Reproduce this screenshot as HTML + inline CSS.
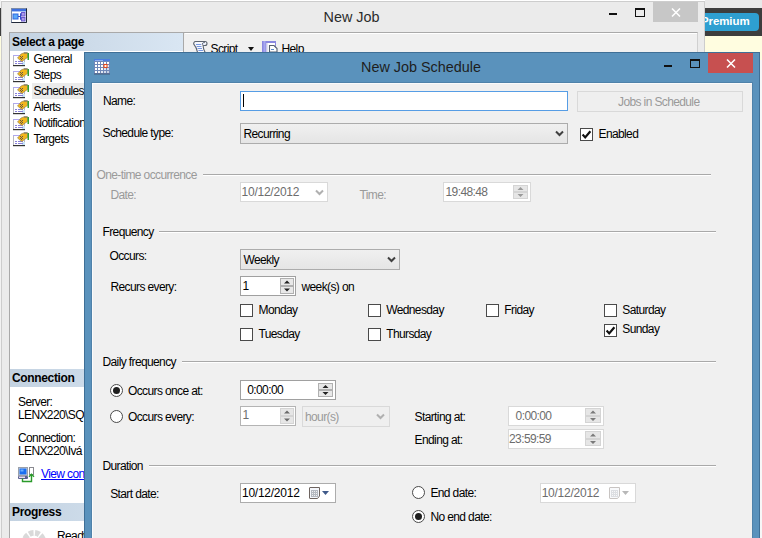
<!DOCTYPE html>
<html><head><meta charset="utf-8">
<style>
*{margin:0;padding:0;box-sizing:border-box}
html,body{width:762px;height:538px;overflow:hidden;background:#fffde0;font-family:"Liberation Sans",sans-serif;font-size:12px;line-height:13px;letter-spacing:-0.62px;color:#000}
div,span{position:absolute;white-space:nowrap}
.t{font-size:11.5px;line-height:13px;letter-spacing:-0.4px}
.b{font-weight:bold;letter-spacing:-0.35px}
.g{color:#9a9a9a}
.gd{color:#6d6d6d}
.box{background:#fff;border:1px solid #acacac}
.dbox{background:#fff;border:1px solid #d9d9d9}
.cb{width:13px;height:13px;background:#fff;border:1px solid #4a4a4a}
.rd{width:13px;height:13px;background:#fff;border:1px solid #4a4a4a;border-radius:50%}
.rd.on::after{content:"";position:absolute;left:2px;top:2px;width:7px;height:7px;border-radius:50%;background:#1f1f1f}
.ln{height:2px;border-top:1px solid #a9a9a9;border-bottom:1px solid #fff}
.combo{border:1px solid #acacac;background:linear-gradient(#f0f0f0,#e5e5e5)}
.spin{border:1px solid #d4d4d4;background:#e6e6e6}
.hdr{background:linear-gradient(to right,#c3d2e1,#d9e6f3)}
</style></head><body>
<!-- background page -->
<div style="left:0;top:0;width:762px;height:1px;background:#fff"></div>
<div style="left:0;top:0;width:1px;height:8px;background:#f4f4f4"></div>
<div style="left:705px;top:0;width:57px;height:8px;background:#e9e9e9"></div>
<div style="left:705px;top:8px;width:57px;height:28px;background:#3d3d3d"></div>
<div style="left:690px;top:13px;width:69px;height:18px;background:#2e9fd1;border-radius:4px"></div>
<div class="b" style="left:701px;top:15px;font-size:11.5px;line-height:13px;letter-spacing:-0.1px;color:#fff">Premium</div>
<div style="left:0;top:8px;width:1px;height:28px;background:#3d3d3d"></div>
<div style="left:0;top:60px;width:1px;height:478px;background:#f2f2f2"></div>
<div style="left:760px;top:60px;width:2px;height:478px;background:#f7f7f7"></div>

<!-- New Job window -->
<div style="left:1px;top:1px;width:704px;height:540px;background:#ebebeb;border:1px solid #cdcdcd"></div>
<svg style="position:absolute;left:11px;top:8px" width="16" height="15">
<rect x="0.5" y="0.5" width="15" height="14" fill="#fff" stroke="#7a8aa8"/>
<path d="M15.5 0.5 V14.5 H0.5" fill="none" stroke="#202838" stroke-width="1"/>
<rect x="1" y="1" width="14" height="2" fill="#3d6fe0"/>
<rect x="1" y="3" width="14" height="1" fill="#a8c0f0"/>
<rect x="2" y="6" width="5" height="5" fill="#5aa8f8" stroke="#2e66e0" stroke-width="1"/>
<path d="M7 8.5 H9.5 M9.5 5.5 V11.5 M9.5 5.5 H11 M9.5 11.5 H11" stroke="#2d50c8" stroke-width="1"/>
<rect x="10.5" y="4.5" width="3.5" height="3.5" fill="#a89ce8" stroke="#6a58d0" stroke-width="1"/>
<rect x="10.5" y="9.5" width="3.5" height="3.5" fill="#a89ce8" stroke="#6a58d0" stroke-width="1"/>
</svg>
<div style="left:323.5px;top:8.5px;font-size:14.4px;line-height:16px;letter-spacing:0;color:#2b2b2b">New Job</div>
<div style="left:609px;top:13px;width:8px;height:2px;background:#111"></div>
<div style="left:635px;top:8px;width:10px;height:9px;border:1px solid #111;border-top-width:2px"></div>
<div style="left:653px;top:2px;width:45px;height:20px;background:#c7c7c7"></div>
<div style="left:0;top:0;width:0;height:0"></div>

<!-- left pane -->
<div style="left:9px;top:32px;width:175px;height:520px;background:#fff;border:1px solid #a9a9a9"></div>
<div class="hdr" style="left:10px;top:33px;width:173px;height:18px"></div>
<div class="b" style="left:12px;top:36px">Select a page</div>
<div style="left:32px;top:83px;width:60px;height:16px;background:#ebebeb"></div>
<div style="left:33.5px;top:53px">General</div>
<div style="left:33.5px;top:69px">Steps</div>
<div style="left:33.5px;top:85px">Schedules</div>
<div style="left:33.5px;top:101px">Alerts</div>
<div style="left:33.5px;top:117px">Notifications</div>
<div style="left:33.5px;top:133px">Targets</div>
<div class="hdr" style="left:10px;top:369px;width:173px;height:18px"></div>
<div class="b" style="left:12px;top:372px">Connection</div>
<div style="left:18px;top:396px">Server:</div>
<div style="left:18px;top:409px">LENX220\SQLEXPRESS</div>
<div style="left:18px;top:432px">Connection:</div>
<div style="left:18px;top:445px">LENX220\Ivá</div>
<div style="left:41px;top:468px;color:#0000ff;text-decoration:underline">View connection properties</div>
<div class="hdr" style="left:10px;top:503px;width:173px;height:18px"></div>
<div class="b" style="left:12px;top:506px">Progress</div>
<div style="left:57px;top:530px">Ready</div>


<!-- left pane icons -->
<svg style="position:absolute;left:0;top:0;width:0;height:0">
<defs>
<g id="pgi">
<rect x="0.5" y="3.5" width="11" height="10" fill="#fff" stroke="#b8b8c0"/>
<rect x="0" y="3" width="12" height="1" fill="#b0a8f0"/>
<rect x="0" y="13" width="12" height="1.2" fill="#333"/>
<rect x="9" y="10" width="3" height="3" fill="#c8e4f8"/>
<rect x="2" y="9" width="2" height="1" fill="#8880d8"/><rect x="5" y="9" width="5" height="1" fill="#8880d8"/>
<rect x="2" y="11" width="2" height="1" fill="#8880d8"/><rect x="5" y="11" width="5" height="1" fill="#8880d8"/>
<path d="M4.5 6 L8 2 L11 0.8 L14.5 0.8 L14.5 5.5 L11.5 7.5 L9 9.5 L7.5 8.5 Z" fill="#f2b61c" stroke="#8a7a50" stroke-width="0.6"/>
<path d="M11 1 H14.5" stroke="#707070" stroke-width="1"/>
<g fill="#3a3a50" opacity=".75"><rect x="7" y="4" width="1" height="1"/><rect x="9" y="4" width="1" height="1"/><rect x="8" y="5" width="1" height="1"/><rect x="7" y="6" width="1" height="1"/><rect x="9" y="6" width="1" height="1"/><rect x="8" y="7" width="1" height="1"/></g>
<rect x="14.5" y="1" width="1.5" height="7" fill="#30a030"/>
</g>
</defs></svg>
<svg style="position:absolute;left:13px;top:52px" width="17" height="15"><use href="#pgi"/></svg>
<svg style="position:absolute;left:13px;top:68px" width="17" height="15"><use href="#pgi"/></svg>
<svg style="position:absolute;left:13px;top:84px" width="17" height="15"><use href="#pgi"/></svg>
<svg style="position:absolute;left:13px;top:100px" width="17" height="15"><use href="#pgi"/></svg>
<svg style="position:absolute;left:13px;top:116px" width="17" height="15"><use href="#pgi"/></svg>
<svg style="position:absolute;left:13px;top:132px" width="17" height="15"><use href="#pgi"/></svg>
<!-- view connection icon -->
<svg style="position:absolute;left:17px;top:466px" width="18" height="17">
<rect x="1.5" y="1.5" width="9" height="8" fill="#d0d4dc" stroke="#9aa0aa"/>
<rect x="2.5" y="2.5" width="7" height="6" fill="#1a6ef0"/>
<rect x="3.5" y="3.5" width="3" height="2" fill="#6ab0ff"/>
<rect x="1" y="10" width="10" height="3" rx="1" fill="#5a5f90"/>
<rect x="2" y="10.5" width="6" height="1.5" fill="#e8e0f0"/>
<rect x="12.5" y="1.5" width="4" height="7" fill="#fff" stroke="#8a8a90"/>
<path d="M5.5 12.5 V15.5 H14.5 V9" fill="none" stroke="#2a9a2a" stroke-width="1.4"/>
<path d="M12 10.8 L14.5 8.3 L17 10.8" fill="none" stroke="#2a9a2a" stroke-width="1.4"/>
</svg>
<!-- spinner -->
<svg style="position:absolute;left:20px;top:528px" width="28" height="12">
<circle cx="14" cy="14.5" r="9.6" fill="none" stroke="#d9d9d9" stroke-width="5.8" stroke-dasharray="4.5 1.53" stroke-dashoffset="-3.79"/>
</svg>
<!-- toolbar -->
<div style="left:184px;top:32px;width:514px;height:520px;background:#f0f0f0;border:1px solid #a9a9a9;border-left:none;border-right-color:#d0d0d0"></div>
<div style="left:185px;top:33px;width:512px;height:1px;background:#fff"></div>
<div style="left:210.5px;top:43px">Script</div>
<div style="left:248px;top:47px;width:0;height:0;border-left:3.5px solid transparent;border-right:3.5px solid transparent;border-top:4px solid #111"></div>
<div style="left:281.5px;top:43px">Help</div><!-- script icon -->
<svg style="position:absolute;left:192px;top:40px" width="16" height="12">
<path d="M3.5 1.5 H13 A2 2 0 0 1 13 5.5 H11.2 Q11 8.5 13.2 12.5 H5.5 Q4.8 8 1.8 4.2 A2 2 0 0 1 3.5 1.5Z" fill="#f6f8fd" stroke="#5c6470" stroke-width="1.1"/>
<path d="M11.2 5.5 A1.6 1.6 0 0 1 12.8 2.6" fill="#cfd8ee" stroke="#5c6470" stroke-width="1"/>
<path d="M4 4.5 H9 M4.6 6.5 H9.5 M5.6 8.5 H10 M6.4 10.5 H11" stroke="#7898e0" stroke-width="1"/>
</svg>
<!-- help icon -->
<svg style="position:absolute;left:262px;top:40px" width="18" height="12">
<rect x="0" y="1" width="14" height="11" fill="#8a88e0"/>
<rect x="1.5" y="1" width="2" height="11" fill="#a8a8f0"/>
<rect x="4" y="3" width="9" height="9" fill="#fff"/>
<rect x="4" y="3" width="1.5" height="9" fill="#c8c8e8"/>
<path d="M7.5 5.5 H12 L15 8.5 V12 H7.5Z" fill="#fff" stroke="#566070" stroke-width="1.1"/>
<rect x="9" y="9" width="3" height="1" fill="#5f8ac8"/>
</svg>


<!-- dialog -->
<div id="dlg" style="left:84px;top:52px;width:676px;height:500px;background:#5a92bc;border:1px solid #3f6f96"></div>
<div style="left:361px;top:59px;font-size:14.4px;line-height:16px;letter-spacing:0;color:#1e1e1e">New Job Schedule</div>
<div style="left:708px;top:53px;width:45px;height:20px;background:#c75050"></div>
<div style="left:664px;top:65px;width:8px;height:2px;background:#111"></div>
<div style="left:690px;top:59px;width:10px;height:9px;border:1px solid #111;border-top-width:2px"></div>
<div style="left:91px;top:82px;width:662px;height:470px;border:1px solid #4f82aa"></div>
<div style="left:92px;top:83px;width:660px;height:460px;background:#f0f0f0;border-top:1px solid #fbfbfb;border-left:1px solid #fbfbfb"></div>
<!-- dialog title icon -->
<svg style="position:absolute;left:94px;top:59px" width="16" height="16" viewBox="0 0 16 16">
<rect x="0" y="0" width="16" height="15" fill="#6f88b8"/>
<rect x="0" y="0" width="16" height="2" fill="#4a7de0"/>
<rect x="1" y="1" width="8" height="1" fill="#8fb0f0"/>
<g fill="#fff">
<rect x="1" y="3" width="2" height="2"/><rect x="4" y="3" width="2" height="2"/><rect x="7" y="3" width="2" height="2"/><rect x="10" y="3" width="2" height="2"/><rect x="13" y="3" width="2" height="2"/>
<rect x="1" y="6" width="2" height="2"/><rect x="4" y="6" width="2" height="2"/><rect x="7" y="6" width="2" height="2"/><rect x="13" y="6" width="2" height="2" opacity=".8"/>
<rect x="1" y="9" width="2" height="2"/><rect x="4" y="9" width="2" height="2"/><rect x="7" y="9" width="2" height="2"/><rect x="10" y="9" width="2" height="2" opacity=".8"/><rect x="13" y="9" width="2" height="2" opacity=".7"/>
<rect x="1" y="12" width="2" height="2"/><rect x="4" y="12" width="2" height="2" opacity=".9"/><rect x="7" y="12" width="2" height="2" opacity=".8"/><rect x="10" y="12" width="2" height="2" opacity=".7"/><rect x="13" y="12" width="2" height="2" opacity=".6"/>
</g>
<rect x="10" y="5.5" width="3" height="3" fill="#fff" stroke="#e8481a" stroke-width="1.1"/>
<rect x="0" y="14.5" width="16" height="1" fill="#3a4660" opacity=".7"/>
</svg>
<!-- close X glyphs -->
<svg style="position:absolute;left:671px;top:8px" width="10" height="9"><path d="M1 0.5 L9 8.5 M9 0.5 L1 8.5" stroke="#fff" stroke-width="1.5"/></svg>
<svg style="position:absolute;left:726px;top:59px" width="10" height="9"><path d="M1 0.5 L9 8.5 M9 0.5 L1 8.5" stroke="#fff" stroke-width="1.5"/></svg>


<!-- dialog content -->
<div style="left:103px;top:95px">Name:</div>
<div style="left:240px;top:91px;width:328px;height:20px;background:#fff;border:1px solid #569de5"></div>
<div style="left:243px;top:94px;width:1px;height:13px;background:#000"></div>
<div style="left:577px;top:91px;width:166px;height:21px;background:#efefef;border:1px solid #d9d9d9"></div>
<div class="g" style="left:618px;top:95.5px">Jobs in Schedule</div>

<div style="left:102.5px;top:127px">Schedule type:</div>
<div class="combo" style="left:240px;top:123px;width:328px;height:21px"></div>
<div style="left:243.5px;top:128px">Recurring</div>
<svg style="position:absolute;left:555px;top:130px" width="9" height="7"><path d="M1 1.5 L4.5 5 L8 1.5" fill="none" stroke="#404040" stroke-width="2"/></svg>
<div class="cb" style="left:580px;top:128px"></div>
<svg style="position:absolute;left:580px;top:128px" width="13" height="13"><path d="M2.6 6.6 L5.2 9.4 L10.4 3.2" fill="none" stroke="#111" stroke-width="2.2"/></svg>
<div style="left:598.5px;top:128px">Enabled</div>

<!-- one-time -->
<div class="g" style="left:96.5px;top:169px">One-time occurrence</div>
<div class="ln" style="left:203px;top:174px;width:508px"></div>
<div class="g" style="left:110.5px;top:188.5px">Date:</div>
<div class="dbox" style="left:240px;top:182px;width:88px;height:20px"></div>
<div class="gd" style="left:241.6px;top:185.7px;letter-spacing:-0.25px">10/12/2012</div>
<svg style="position:absolute;left:315px;top:189px" width="9" height="7"><path d="M1 1.5 L4.5 5 L8 1.5" fill="none" stroke="#b0b0b0" stroke-width="2"/></svg>
<div class="g" style="left:359.5px;top:188.5px">Time:</div>
<div class="dbox" style="left:443px;top:182px;width:88px;height:20px"></div>
<div class="gd" style="left:445.5px;top:185.7px;letter-spacing:-0.6px">19:48:48</div>
<div class="spin" style="left:513px;top:185px;width:15px;height:7px"></div>
<div class="spin" style="left:513px;top:192px;width:15px;height:7px"></div>
<svg style="position:absolute;left:513px;top:185px" width="15" height="14"><path d="M4.5 5 L7.5 2 L10.5 5Z M4.5 9 L7.5 12 L10.5 9Z" fill="#9a9a9a"/></svg>

<!-- frequency -->
<div style="left:102.5px;top:225.5px">Frequency</div>
<div class="ln" style="left:159px;top:231px;width:557px"></div>
<div style="left:109.5px;top:249.5px">Occurs:</div>
<div class="combo" style="left:240px;top:249px;width:160px;height:21px"></div>
<div style="left:243.5px;top:254px">Weekly</div>
<svg style="position:absolute;left:387px;top:256px" width="9" height="7"><path d="M1 1.5 L4.5 5 L8 1.5" fill="none" stroke="#404040" stroke-width="2"/></svg>
<div style="left:110.5px;top:281px">Recurs every:</div>
<div class="box" style="left:240px;top:276px;width:56px;height:20px;border-color:#a0a0a0"></div>
<div style="left:242.5px;top:280px">1</div>
<div class="spin" style="left:280px;top:278px;width:14px;height:8px;border-color:#b0b0b0;background:#e8e8e8"></div>
<div class="spin" style="left:280px;top:286px;width:14px;height:8px;border-color:#b0b0b0;background:#e8e8e8"></div>
<svg style="position:absolute;left:280px;top:278px" width="14" height="16"><path d="M4 5.5 L7 2.5 L10 5.5Z M4 10.5 L7 13.5 L10 10.5Z" fill="#222"/></svg>
<div style="left:301.5px;top:281px">week(s) on</div>

<div class="cb" style="left:240px;top:304px"></div><div style="left:258.5px;top:304px">Monday</div>
<div class="cb" style="left:240px;top:328px"></div><div style="left:258.5px;top:327.5px">Tuesday</div>
<div class="cb" style="left:368px;top:304px"></div><div style="left:386.2px;top:304px">Wednesday</div>
<div class="cb" style="left:368px;top:328px"></div><div style="left:386.2px;top:327.5px">Thursday</div>
<div class="cb" style="left:486px;top:304px"></div><div style="left:504.3px;top:304px">Friday</div>
<div class="cb" style="left:604px;top:304px"></div><div style="left:622.3px;top:304px">Saturday</div>
<div class="cb" style="left:604px;top:324px"></div>
<svg style="position:absolute;left:604px;top:324px" width="13" height="13"><path d="M2.6 6.6 L5.2 9.4 L10.4 3.2" fill="none" stroke="#111" stroke-width="2.2"/></svg>
<div style="left:622.3px;top:323px">Sunday</div>

<!-- daily frequency -->
<div style="left:102.5px;top:355.7px">Daily frequency</div>
<div class="ln" style="left:182px;top:361px;width:534px"></div>
<div class="rd on" style="left:110px;top:384px"></div>
<div style="left:128px;top:385px">Occurs once at:</div>
<div class="box" style="left:240px;top:380px;width:96px;height:20px;border-color:#a0a0a0"></div>
<div style="left:247.2px;top:384px;letter-spacing:-0.6px">0:00:00</div>
<div class="spin" style="left:318px;top:383px;width:15px;height:7px;border-color:#b0b0b0;background:#e8e8e8"></div>
<div class="spin" style="left:318px;top:390px;width:15px;height:7px;border-color:#b0b0b0;background:#e8e8e8"></div>
<svg style="position:absolute;left:318px;top:383px" width="15" height="14"><path d="M4.5 5 L7.5 2 L10.5 5Z M4.5 9 L7.5 12 L10.5 9Z" fill="#222"/></svg>

<div class="rd" style="left:110px;top:410px"></div>
<div style="left:128px;top:410.6px">Occurs every:</div>
<div class="dbox" style="left:240px;top:406px;width:56px;height:20px;border-color:#b4b4b4"></div>
<div class="gd" style="left:242.5px;top:409px">1</div>
<div class="spin" style="left:280px;top:408px;width:14px;height:8px"></div>
<div class="spin" style="left:280px;top:416px;width:14px;height:8px"></div>
<svg style="position:absolute;left:280px;top:408px" width="14" height="16"><path d="M4 5.5 L7 2.5 L10 5.5Z M4 10.5 L7 13.5 L10 10.5Z" fill="#6a6a6a"/></svg>
<div style="left:302px;top:406px;width:88px;height:21px;background:#efefef;border:1px solid #d9d9d9"></div>
<div class="g" style="left:305px;top:410.6px">hour(s)</div>
<svg style="position:absolute;left:376px;top:413px" width="9" height="7"><path d="M1 1.5 L4.5 5 L8 1.5" fill="none" stroke="#b0b0b0" stroke-width="2"/></svg>

<div style="left:414.6px;top:410.5px">Starting at:</div>
<div class="dbox" style="left:508px;top:406px;width:96px;height:20px"></div>
<div class="gd" style="left:515.6px;top:410px;letter-spacing:-0.6px">0:00:00</div>
<div class="spin" style="left:585px;top:408px;width:16px;height:8px"></div>
<div class="spin" style="left:585px;top:416px;width:16px;height:7px"></div>
<svg style="position:absolute;left:585px;top:408px" width="16" height="15"><path d="M5 5.5 L8 2.5 L11 5.5Z M5 10 L8 13 L11 10Z" fill="#7a7a7a"/></svg>
<div style="left:414.6px;top:433.5px">Ending at:</div>
<div class="dbox" style="left:508px;top:429px;width:96px;height:20px"></div>
<div class="gd" style="left:509px;top:433px;letter-spacing:-0.6px">23:59:59</div>
<div class="spin" style="left:585px;top:431px;width:16px;height:8px"></div>
<div class="spin" style="left:585px;top:439px;width:16px;height:7px"></div>
<svg style="position:absolute;left:585px;top:431px" width="16" height="15"><path d="M5 5.5 L8 2.5 L11 5.5Z M5 10 L8 13 L11 10Z" fill="#7a7a7a"/></svg>

<!-- duration -->
<div style="left:102.5px;top:460px">Duration</div>
<div class="ln" style="left:149px;top:465px;width:567px"></div>
<div style="left:110.2px;top:487.8px">Start date:</div>
<div class="box" style="left:240px;top:483px;width:96px;height:20px"></div>
<div style="left:242px;top:486.6px;letter-spacing:-0.25px">10/12/2012</div>
<svg style="position:absolute;left:309px;top:487px" width="21" height="12">
<path d="M1 0.5 H10.5 V9 L8.5 11.5 H1 A0.5 0.5 0 0 1 0.5 11 V1 A0.5 0.5 0 0 1 1 0.5Z" fill="#f4f6fb" stroke="#6e6460" stroke-width="1"/>
<rect x="2" y="3" width="7" height="7" fill="#b4b8c0"/>
<g fill="#f0f0f0"><rect x="3" y="4" width="1" height="1"/><rect x="5" y="4" width="1" height="1"/><rect x="7" y="4" width="1" height="1"/><rect x="3" y="6" width="1" height="1"/><rect x="5" y="6" width="1" height="1"/><rect x="7" y="6" width="1" height="1"/><rect x="3" y="8" width="1" height="1"/><rect x="5" y="8" width="1" height="1"/><rect x="7" y="8" width="1" height="1"/></g>
<path d="M13 4 H20 L16.5 8Z" fill="#3f5a8a"/>
</svg>
<div class="rd" style="left:412px;top:486px"></div>
<div style="left:430.4px;top:487px">End date:</div>
<div class="rd on" style="left:412px;top:510px"></div>
<div style="left:430.4px;top:510.5px">No end date:</div>
<div class="dbox" style="left:540px;top:483px;width:96px;height:20px"></div>
<div class="gd" style="left:541.7px;top:486.6px;letter-spacing:-0.25px">10/12/2012</div>
<svg style="position:absolute;left:609px;top:487px" width="21" height="12">
<path d="M1 0.5 H10.5 V9 L8.5 11.5 H1 A0.5 0.5 0 0 1 0.5 11 V1 A0.5 0.5 0 0 1 1 0.5Z" fill="#f8f9fb" stroke="#c8c4c2" stroke-width="1"/>
<rect x="2" y="3" width="7" height="7" fill="#dcdee2"/>
<g fill="#f8f8f8"><rect x="3" y="4" width="1" height="1"/><rect x="5" y="4" width="1" height="1"/><rect x="7" y="4" width="1" height="1"/><rect x="3" y="6" width="1" height="1"/><rect x="5" y="6" width="1" height="1"/><rect x="7" y="6" width="1" height="1"/><rect x="3" y="8" width="1" height="1"/><rect x="5" y="8" width="1" height="1"/><rect x="7" y="8" width="1" height="1"/></g>
<path d="M13 4 H20 L16.5 8Z" fill="#b8b8b8"/>
</svg>
</body></html>
